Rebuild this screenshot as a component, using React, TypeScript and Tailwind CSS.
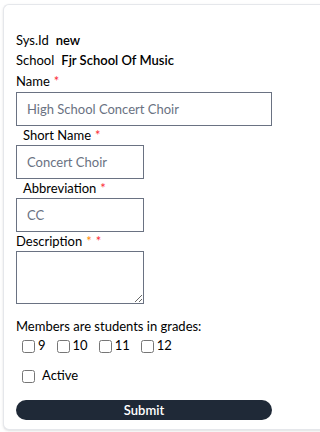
import { useState } from "react";

const grades = ["9", "10", "11", "12"];

function Req({ className = "text-red-500" }: { className?: string }) {
    return <span className={`ml-[4px] ${className}`}>*</span>;
}

export default function App() {
    const [checked, setChecked] = useState<Record<string, boolean>>({});
    const [active, setActive] = useState(false);

    return (
        <div className="h-[432px] w-full overflow-hidden bg-white pl-[3px] pt-[4px] font-['Lato',sans-serif] text-[13px] text-black">
            <div className="h-[426px] w-[600px] rounded-l-md border border-r-0 border-gray-200 bg-white pl-[12px] pt-[26px] shadow-sm">
                <div className="flex h-[20px] items-center gap-[7px]">
                    <span>Sys.Id</span>
                    <span className="font-semibold">new</span>
                </div>
                <div className="flex h-[20px] items-center gap-[7px]">
                    <span>School</span>
                    <span className="font-semibold">Fjr School Of Music</span>
                </div>

                <label className="flex h-[21px] items-center">
                    Name
                    <Req />
                </label>
                <input
                    placeholder="High School Concert Choir"
                    className="block h-[34px] w-[256px] border border-gray-500 px-[10px] placeholder:text-gray-500"
                />

                <label className="flex h-[19px] items-center pl-[7px]">
                    Short Name
                    <Req />
                </label>
                <input
                    placeholder="Concert Choir"
                    className="block h-[34px] w-[128px] border border-gray-500 px-[10px] placeholder:text-gray-500"
                />

                <label className="flex h-[19px] items-center pl-[7px]">
                    Abbreviation
                    <Req />
                </label>
                <input
                    placeholder="CC"
                    className="block h-[34px] w-[128px] border border-gray-500 px-[10px] placeholder:text-gray-500"
                />

                <label className="flex h-[19px] items-center">
                    Description
                    <Req className="text-orange-400" />
                    <Req />
                </label>
                <textarea className="block h-[53px] w-[128px] border border-gray-500 px-[10px]" />

                <div className="mt-[13px] flex h-[20px] items-center">
                    Members are students in grades:
                </div>
                <div className="flex h-[18px] items-center pl-[6px]">
                    {grades.map((g) => (
                        <label key={g} className="mr-[11px] flex items-center gap-[3px]">
                            <input
                                type="checkbox"
                                checked={!!checked[g]}
                                onChange={() => setChecked({ ...checked, [g]: !checked[g] })}
                                className="m-0 h-[13px] w-[13px]"
                            />
                            {g}
                        </label>
                    ))}
                </div>

                <label className="mt-[11px] flex h-[20px] items-center gap-[7px] pl-[6px]">
                    <input
                        type="checkbox"
                        checked={active}
                        onChange={() => setActive(!active)}
                        className="m-0 h-[13px] w-[13px]"
                    />
                    Active
                </label>

                <button className="mt-[14px] block h-[20px] w-[256px] rounded-full bg-[#1f2937] text-[13px] font-semibold leading-none text-white">
                    Submit
                </button>
            </div>
        </div>
    );
}
